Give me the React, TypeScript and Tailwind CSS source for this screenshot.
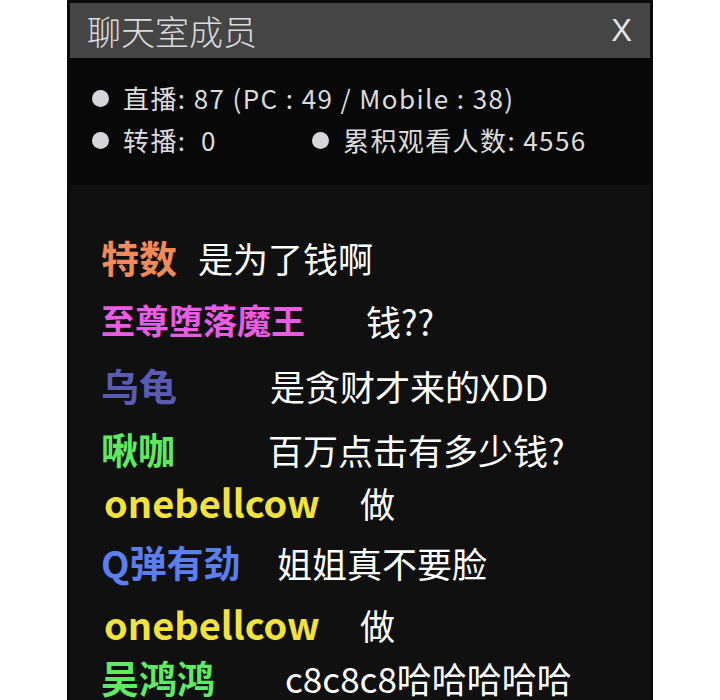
import React from "react";

const font = { fontFamily: '"Noto Sans CJK SC", "Noto Sans", sans-serif' };

type Row = {
  name: string;
  msg: string;
  color: string;
  nameW: string;
  nameSize: string;
  mt: string;
  pl: string;
};

const rows: Row[] = [
  { name: "特数", msg: "是为了钱啊", color: "text-[#f08a5a]", nameW: "w-[97px]", nameSize: "text-[38px]", mt: "mt-[52px]", pl: "pl-[31px]" },
  { name: "至尊堕落魔王", msg: "钱??", color: "text-[#ea5ce4]", nameW: "w-[265px]", nameSize: "text-[34px]", mt: "mt-[23px]", pl: "pl-[31px]" },
  { name: "乌龟", msg: "是贪财才来的XDD", color: "text-[#5a5cb4]", nameW: "w-[169px]", nameSize: "text-[38px]", mt: "mt-[25px]", pl: "pl-[31px]" },
  { name: "啾咖", msg: "百万点击有多少钱?", color: "text-[#5eea5e]", nameW: "w-[167px]", nameSize: "text-[37px]", mt: "mt-[24px]", pl: "pl-[31px]" },
  { name: "onebellcow", msg: "做", color: "text-[#f2e23e]", nameW: "w-[256px]", nameSize: "text-[38px]", mt: "mt-[13px]", pl: "pl-[34px]" },
  { name: "Q弹有劲", msg: "姐姐真不要脸", color: "text-[#5b7ef0]", nameW: "w-[176px]", nameSize: "text-[37px]", mt: "mt-[20px]", pl: "pl-[31px]" },
  { name: "onebellcow", msg: "做", color: "text-[#f2e23e]", nameW: "w-[256px]", nameSize: "text-[38px]", mt: "mt-[22px]", pl: "pl-[34px]" },
  { name: "吴鸿鸿", msg: "c8c8c8哈哈哈哈哈", color: "text-[#5eea62]", nameW: "w-[184px]", nameSize: "text-[38px]", mt: "mt-[13px]", pl: "pl-[31px]" },
];

function Bullet() {
  return <span className="inline-block w-[17px] h-[17px] rounded-full bg-[#d6d6d8] shrink-0" />;
}

export default function App() {
  return (
    <div className="w-[720px] h-[700px] bg-white overflow-hidden" style={font}>
      <div className="ml-[67px] w-[586px] h-[700px] bg-[#050505] border-x-[3px] border-t-[3px] border-[#0a0a0a] flex flex-col">
        <div className="h-[55px] bg-[#454545] flex items-center justify-between pl-[17px] pr-[18px] shrink-0">
          <span className="text-[34px] text-[#dcdcdf] font-light leading-none">聊天室成员</span>
          <span className="text-[31px] text-[#e4e4e8] leading-none" style={{ fontFamily: '"Liberation Sans", sans-serif' }}>X</span>
        </div>
        <div className="h-[127px] bg-[#080808] pt-[22px] pl-[22px] shrink-0 text-[#dcdcdf] text-[26px] tracking-[1.4px]">
          <div className="h-[36px] flex items-center gap-[14px]">
            <Bullet />
            <span className="leading-none">直播: 87 (PC : 49 / Mobile : 38)</span>
          </div>
          <div className="h-[36px] mt-[6px] flex items-center">
            <div className="w-[220px] flex items-center gap-[14px]">
              <Bullet />
              <span className="leading-none whitespace-pre">转播:  0</span>
            </div>
            <div className="flex items-center gap-[14px]">
              <Bullet />
              <span className="leading-none">累积观看人数: 4556</span>
            </div>
          </div>
        </div>
        <div className="flex-1 bg-[#101010] flex flex-col">
          {rows.map((r, i) => (
            <div key={i} className={`h-[40px] flex items-center ${r.mt} ${r.pl}`}>
              <span className={`${r.nameW} ${r.nameSize} ${r.color} font-bold leading-none shrink-0 whitespace-nowrap`}>{r.name}</span>
              <span className="text-[35px] text-white leading-none whitespace-nowrap">{r.msg}</span>
            </div>
          ))}
        </div>
      </div>
    </div>
  );
}
